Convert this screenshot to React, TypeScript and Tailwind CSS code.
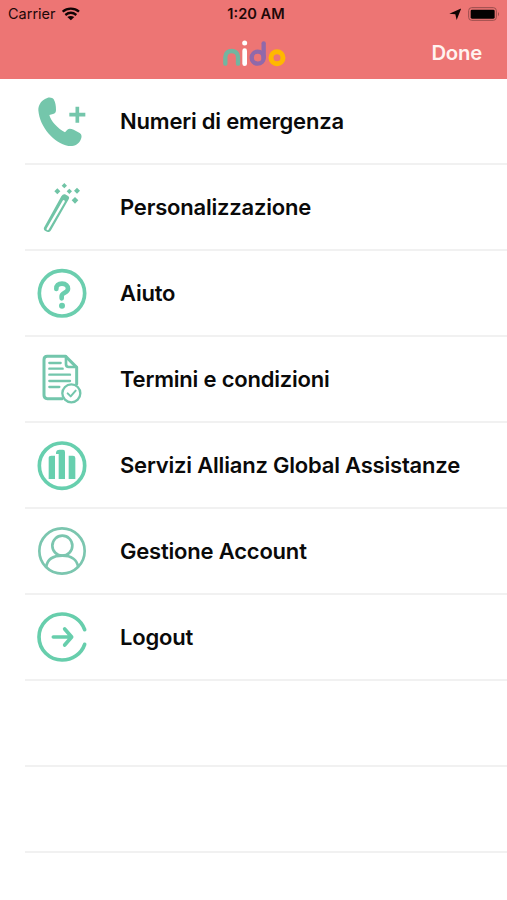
import type { ReactNode } from 'react';

const stroke = {
  fill: 'none',
  stroke: 'currentColor',
  strokeLinecap: 'round',
  strokeLinejoin: 'round',
} as const;

function Icon({ box, color, children }: { box: string; color: string; children: ReactNode }) {
  return (
    <svg viewBox={box} className={`h-[60px] w-[60px] shrink-0 ${color}`} fill="currentColor">
      {children}
    </svg>
  );
}

const PhoneIcon = () => (
  <Icon box="36 21 180 180" color="text-[#74c6ab]">
    <path d="M75 42C84 35 97 36 101 43C106 52 108 61 108 75C108 82 105 86 99 87L88 90C92 108 114 131 135 142L142 134C147 129 153 131 161 134L179 144C186 149 186 156 182 164C176 178 163 185 145 183C101 174 59 126 55 76C55 61 62 49 75 42Z" />
    <path d="M172 65V113M148 89H196" fill="none" stroke="currentColor" strokeWidth="11" />
  </Icon>
);

const WandIcon = () => (
  <Icon box="36 24 180 180" color="text-[#70c4a6]">
    <path d="M124 79Q129 71 135 73L143 77Q150 81 146 88L93 181Q89 189 81 185L75 182Q69 178 73 171Z" />
    <path d="M131 94L83 177" stroke="white" strokeWidth="7" strokeLinecap="round" />
    <path d="M112 55L121 64L112 73L103 64ZM133 39L141 47L133 55L125 47ZM148 56L156 64L148 72L140 64ZM171 53L180 62L171 71L162 62ZM165 81L175 91L165 101L155 91Z" />
  </Icon>
);

const HelpIcon = () => (
  <Icon box="36 27 180 180" color="text-[#6bceae]">
    <circle cx="126" cy="115" r="68" {...stroke} strokeWidth="11" />
    <path d="M109 102C108 92 115 86 126 86C138 86 144 93 144 101C144 113 125 113 125 123V130" {...stroke} strokeWidth="14" />
    <circle cx="126" cy="152" r="9" />
  </Icon>
);

const TermsIcon = () => (
  <Icon box="36 30 180 180" color="text-[#73c6ac]">
    <path d="M126 176H82Q72 176 72 166V59Q72 49 82 49H137L170 82V132" {...stroke} strokeWidth="9" />
    <path d="M138 50V73Q138 81 146 81H169" {...stroke} strokeWidth="8" />
    <path d="M88 69H122M88 86H128M88 104H150M88 123H150M88 141H118" {...stroke} strokeWidth="7" />
    <circle cx="154" cy="160" r="27" fill="white" stroke="currentColor" strokeWidth="7" />
    <path d="M143 160L152 169L167 152" {...stroke} strokeWidth="6" />
  </Icon>
);

const AllianzIcon = () => (
  <Icon box="36 26 180 180" color="text-[#67cfae]">
    <circle cx="126" cy="115" r="68" {...stroke} strokeWidth="11" />
    <path d="M86 92Q86 85 94 85H105V155H86ZM108 77Q108 67 119 67H129Q135 67 135 74V155H116V80H108ZM146 85H159Q166 85 166 92V155H146Z" />
  </Icon>
);

const AccountIcon = () => (
  <Icon box="36 28 180 180" color="text-[#7bc6af]">
    <circle cx="126" cy="118" r="68" {...stroke} strokeWidth="8" />
    <circle cx="127" cy="102" r="30" {...stroke} strokeWidth="8" />
    <path d="M79 165C82 144 99 132 127 132C154 132 171 145 174 165" {...stroke} strokeWidth="8" />
  </Icon>
);

const LogoutIcon = () => (
  <Icon box="36 28 180 180" color="text-[#67ceac]">
    <path d="M194 96C184 67 157 49 126 49A69 69 0 0 0 126 187C157 187 184 169 194 140" {...stroke} strokeWidth="11" />
    <path d="M100 118H154M134 94L155 118L134 142" {...stroke} strokeWidth="11" />
  </Icon>
);

const items = [
  { label: 'Numeri di emergenza', icon: <PhoneIcon /> },
  { label: 'Personalizzazione', icon: <WandIcon /> },
  { label: 'Aiuto', icon: <HelpIcon /> },
  { label: 'Termini e condizioni', icon: <TermsIcon /> },
  { label: 'Servizi Allianz Global Assistanze', icon: <AllianzIcon /> },
  { label: 'Gestione Account', icon: <AccountIcon /> },
  { label: 'Logout', icon: <LogoutIcon /> },
];

function Logo() {
  return (
    <svg viewBox="66 114 195 84" className="h-7 w-[65px]" fill="none" strokeLinecap="round" role="img" aria-label="nido">
      <path d="M76 188V168C76 144 114 144 114 168V188" stroke="#72b5a0" strokeWidth="13" />
      <path d="M134 149V188" stroke="white" strokeWidth="14" />
      <circle cx="134" cy="126" r="7.5" fill="white" />
      <circle cx="173" cy="170" r="18" stroke="#9069aa" strokeWidth="13" />
      <path d="M191 127V170" stroke="#9069aa" strokeWidth="13" />
      <circle cx="231" cy="170" r="18" stroke="#ffb800" strokeWidth="15" />
    </svg>
  );
}

function StatusBar() {
  return (
    <div className="grid h-7 grid-cols-3 items-center pr-[7px] pl-2 text-[#1d0808]">
      <div className="flex items-center gap-[6px] text-[14.500px]">
        <span>Carrier</span>
        <svg viewBox="186 18 54 42" className="h-[14px] w-[18px]" fill="none" stroke="#100404" strokeWidth="7">
          <path d="M188 32C202 20 223 20 237 32M196 42C206 34 219 34 229 42" />
          <path d="M212.500 58L202 48Q212 42 223 48Z" fill="#100404" stroke="none" />
        </svg>
      </div>
      <span className="pt-0.5 pl-1 text-center text-[14.600px] font-semibold">1:20 AM</span>
      <div className="flex items-center justify-end gap-[7px]">
        <svg viewBox="149 21 37 36" className="h-3 w-[12.300px]" fill="#100404">
          <path d="M186 22L172 57L168 40L150 38Z" />
        </svg>
        <svg viewBox="207 18 96 42" className="h-[14px] w-8">
          <rect x="209" y="20" width="83" height="38" rx="9" fill="none" stroke="#9a4d4c" strokeWidth="3" />
          <rect x="215" y="26" width="72" height="27" rx="4" fill="#050202" />
          <path d="M297 33Q303 39 297 46Z" fill="#9a4d4c" />
        </svg>
      </div>
    </div>
  );
}

export default function App() {
  return (
    <main className="h-[900px] w-full overflow-hidden bg-white font-['Inter','Liberation_Sans',sans-serif]">
      <header className="h-[79px] bg-[#ed7574]">
        <StatusBar />
        <div className="grid h-[50px] grid-cols-3 items-center pr-[25px] pl-[27px]">
          <span />
          <div className="flex justify-center">
            <Logo />
          </div>
          <button className="text-right text-[20.300px] font-semibold tracking-[-0.200px] text-[#fff3f0]">Done</button>
        </div>
      </header>
      <ul className="pt-[0.500px] pl-[25px]">
        {items.map((item) => (
          <li key={item.label} className="flex h-[85.900px] items-center border-b-2 border-[#f1f1f1] pt-px pl-[7px]">
            {item.icon}
            <span className="ml-7 text-[22px] font-semibold tracking-[-0.200px] whitespace-nowrap text-[#0a0a0a]">
              {item.label}
            </span>
          </li>
        ))}
        <li className="h-[85.900px] border-b-2 border-[#f1f1f1]" />
        <li className="h-[85.900px] border-b-2 border-[#f1f1f1]" />
      </ul>
    </main>
  );
}
